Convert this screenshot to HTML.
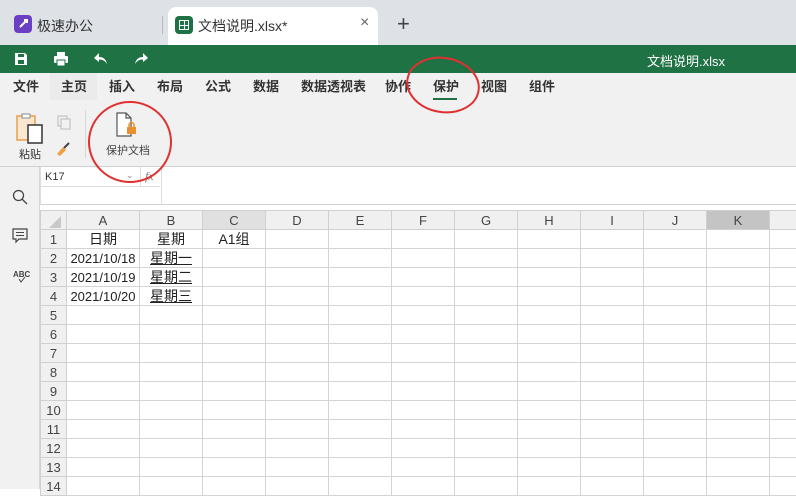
<!DOCTYPE html>
<html><head><meta charset="utf-8"><style>
*{margin:0;padding:0;box-sizing:border-box}
body{width:796px;height:489px;overflow:hidden;position:relative;background:#fff;font-family:"Liberation Sans","Noto Sans CJK SC",sans-serif;font-size:13px;color:#222}
.a{position:absolute}
.menu span{position:absolute;top:79px;font-size:13px;font-weight:bold;color:#333;line-height:15px}
table{position:absolute;left:40px;top:210px;border-collapse:collapse;table-layout:fixed;width:769px}
td{border:1px solid #d4d4d4;height:19px;line-height:17px;font-size:14px;text-align:center;padding:0;white-space:nowrap;overflow:hidden}
tr.h td{background:#f0f0f0;color:#444;font-size:13px;border-color:#d0d0d0}
td.r{background:#f0f0f0;color:#444;font-size:13px;border-color:#d0d0d0}
</style></head><body>
<div class="a" style="left:0;top:0;width:796px;height:45px;background:#dee1e6"></div>
<div class="a" style="left:14px;top:15px;width:18px;height:18px;border-radius:4px;background:#6a3fc4"></div>
<svg class="a" style="left:16px;top:17px" width="14" height="14" viewBox="0 0 14 14"><path d="M4 10 L10 4 M8 3 L11 3 L11 6" stroke="#fff" stroke-width="2" fill="none"/></svg>
<div class="a" style="left:37px;top:16px;font-size:14px;color:#333">极速办公</div>
<div class="a" style="left:162px;top:16px;width:1px;height:18px;background:#bbb"></div>
<div class="a" style="left:168px;top:7px;width:210px;height:38px;background:#fff;border-radius:8px 8px 0 0"></div>
<div class="a" style="left:175px;top:16px;width:18px;height:18px;border-radius:4px;background:#1e7145"></div>
<div class="a" style="left:179px;top:20px;width:10px;height:10px;border:1px solid #fff;background:linear-gradient(#fff,#fff) 4px 0/1px 10px no-repeat,linear-gradient(#fff,#fff) 0 4px/10px 1px no-repeat"></div>
<div class="a" style="left:198px;top:16px;font-size:14px;color:#333">文档说明.xlsx*</div>
<div class="a" style="left:360px;top:14px;font-size:16px;color:#666">×</div>
<div class="a" style="left:397px;top:11px;font-size:22px;color:#444">+</div>
<div class="a" style="left:0;top:45px;width:796px;height:28px;background:#1f7244"></div>
<svg class="a" style="left:13px;top:51px" width="16" height="16" viewBox="0 0 16 16"><path d="M2 2h10l2 2v10H2z" fill="#fff"/><rect x="5" y="3" width="6" height="3" fill="#1f7244"/><rect x="5" y="9" width="6" height="4" fill="#1f7244"/></svg>
<svg class="a" style="left:53px;top:51px" width="16" height="16" viewBox="0 0 16 16"><rect x="4" y="1" width="8" height="4" fill="#fff"/><rect x="1" y="5" width="14" height="7" rx="1" fill="#fff"/><rect x="4" y="9" width="8" height="6" fill="#fff" stroke="#1f7244"/></svg>
<svg class="a" style="left:93px;top:51px" width="16" height="16" viewBox="0 0 16 16"><path d="M6 2 L1 7 L6 11 V8.5 C10 8.5 12 10 14 13 C13 8 10 6 6 6Z" fill="#fff"/></svg>
<svg class="a" style="left:133px;top:51px" width="16" height="16" viewBox="0 0 16 16"><path d="M10 2 L15 7 L10 11 V8.5 C6 8.5 4 10 2 13 C3 8 6 6 10 6Z" fill="#fff"/></svg>
<div class="a" style="left:647px;top:51px;color:#fff;font-size:13px">文档说明.xlsx</div>
<div class="a" style="left:0;top:73px;width:796px;height:94px;background:#f1f1f1;border-bottom:1px solid #d0d0d0"></div>
<div class="a" style="left:50px;top:73px;width:47px;height:27px;background:#ebebeb"></div>
<div class="menu">
<span style="left:13px">文件</span><span style="left:61px">主页</span><span style="left:109px">插入</span><span style="left:157px">布局</span><span style="left:205px">公式</span><span style="left:253px">数据</span><span style="left:301px">数据透视表</span><span style="left:385px">协作</span><span style="left:433px">保护</span><span style="left:481px">视图</span><span style="left:529px">组件</span>
</div>
<div class="a" style="left:433px;top:98px;width:24px;height:2px;background:#1f7244"></div>
<svg class="a" style="left:15px;top:112px" width="30" height="34" viewBox="0 0 30 34"><rect x="2" y="4" width="18" height="24" fill="#fbe7cf" stroke="#e8a050" stroke-width="1.5"/><rect x="7" y="2" width="8" height="4" fill="#fff" stroke="#888"/><rect x="13" y="13" width="14" height="18" fill="#fff" stroke="#333" stroke-width="1.5"/></svg>
<div class="a" style="left:19px;top:146px;font-size:11px;color:#333">粘贴</div>
<svg class="a" style="left:56px;top:114px" width="16" height="16" viewBox="0 0 16 16"><rect x="2" y="2" width="9" height="10" fill="none" stroke="#bbb"/><rect x="5" y="5" width="9" height="10" fill="#f1f1f1" stroke="#bbb"/></svg>
<svg class="a" style="left:55px;top:141px" width="16" height="16" viewBox="0 0 16 16"><path d="M9 7 L14 2" stroke="#444" stroke-width="2"/><path d="M2 13 L8 6 L11 9 L5 15Z" fill="#f0a040"/></svg>
<div class="a" style="left:85px;top:110px;width:1px;height:48px;background:#d6d6d6"></div>
<svg class="a" style="left:115px;top:112px" width="26" height="26" viewBox="0 0 26 26"><path d="M2 1h9l5 5v18H2z" fill="#fff" stroke="#555" stroke-width="1.2"/><path d="M11 1v5h5" fill="none" stroke="#555" stroke-width="1.2"/><rect x="12" y="15" width="9" height="7" fill="#e8912e"/><path d="M14 15v-2a2.5 2.5 0 0 1 5 0v2" fill="none" stroke="#e8912e" stroke-width="1.5"/></svg>
<div class="a" style="left:106px;top:142px;font-size:11px;color:#444">保护文档</div>
<div class="a" style="left:0;top:167px;width:40px;height:322px;background:#f1f1f1;border-right:1px solid #d6d6d6"></div>
<svg class="a" style="left:12px;top:189px" width="16" height="16" viewBox="0 0 16 16"><circle cx="6.5" cy="6.5" r="5" fill="none" stroke="#444" stroke-width="1.3"/><path d="M10 10l5 5" stroke="#444" stroke-width="1.3"/></svg>
<svg class="a" style="left:12px;top:228px" width="16" height="16" viewBox="0 0 16 16"><path d="M1 1h14v10H7l-3 3v-3H1z" fill="none" stroke="#444" stroke-width="1.2"/><path d="M4 4.5h8M4 7.5h8" stroke="#444"/></svg>
<div class="a" style="left:13px;top:270px;font-size:8px;color:#444;font-weight:bold">ABC</div>
<svg class="a" style="left:18px;top:276px" width="8" height="7"><path d="M1 3l2 3 4-5" fill="none" stroke="#444"/></svg>
<div class="a" style="left:40px;top:167px;width:756px;height:38px;background:#fff;border-bottom:1px solid #d0d0d0"></div>
<div class="a" style="left:40px;top:186px;width:120px;height:1px;background:#ddd"></div>
<div class="a" style="left:40px;top:167px;width:1px;height:38px;background:#ddd"></div>
<div class="a" style="left:161px;top:167px;width:1px;height:38px;background:#ddd"></div>
<div class="a" style="left:140px;top:167px;width:1px;height:19px;background:#ddd"></div>
<div class="a" style="left:45px;top:171px;font-size:11px;color:#333">K17</div>
<div class="a" style="left:126px;top:170px;font-size:9px;color:#888">⌄</div>
<div class="a" style="left:145px;top:169px;font-size:12px;color:#777;font-style:italic;font-family:'Liberation Serif',serif">fx</div>
<div class="a" style="left:40px;top:205px;width:756px;height:5px;background:#fff"></div>
<table>
<colgroup><col style="width:26px"><col style="width:73px"><col style="width:63px"><col style="width:63px"><col style="width:63px"><col style="width:63px"><col style="width:63px"><col style="width:63px"><col style="width:63px"><col style="width:63px"><col style="width:63px"><col style="width:63px"><col style="width:40px"></colgroup>
<tr class="h"><td style="background:#f0f0f0"><svg width="12" height="12" style="margin-left:8px;margin-top:4px;display:block"><path d="M12 0V12H0Z" fill="#c8c8c8"/></svg></td><td>A</td><td>B</td><td style="background:#e0e0e0">C</td><td>D</td><td>E</td><td>F</td><td>G</td><td>H</td><td>I</td><td>J</td><td style="background:#c4c4c4">K</td><td></td></tr>
<tr><td class="r">1</td><td>日期</td><td>星期</td><td>A1组</td><td></td><td></td><td></td><td></td><td></td><td></td><td></td><td></td><td></td></tr>
<tr><td class="r">2</td><td style="font-size:13px">2021/10/18</td><td><u>星期一</u></td><td></td><td></td><td></td><td></td><td></td><td></td><td></td><td></td><td></td><td></td></tr>
<tr><td class="r">3</td><td style="font-size:13px">2021/10/19</td><td><u>星期二</u></td><td></td><td></td><td></td><td></td><td></td><td></td><td></td><td></td><td></td><td></td></tr>
<tr><td class="r">4</td><td style="font-size:13px">2021/10/20</td><td><u>星期三</u></td><td></td><td></td><td></td><td></td><td></td><td></td><td></td><td></td><td></td><td></td></tr>
<tr><td class="r">5</td><td></td><td></td><td></td><td></td><td></td><td></td><td></td><td></td><td></td><td></td><td></td><td></td></tr>
<tr><td class="r">6</td><td></td><td></td><td></td><td></td><td></td><td></td><td></td><td></td><td></td><td></td><td></td><td></td></tr>
<tr><td class="r">7</td><td></td><td></td><td></td><td></td><td></td><td></td><td></td><td></td><td></td><td></td><td></td><td></td></tr>
<tr><td class="r">8</td><td></td><td></td><td></td><td></td><td></td><td></td><td></td><td></td><td></td><td></td><td></td><td></td></tr>
<tr><td class="r">9</td><td></td><td></td><td></td><td></td><td></td><td></td><td></td><td></td><td></td><td></td><td></td><td></td></tr>
<tr><td class="r">10</td><td></td><td></td><td></td><td></td><td></td><td></td><td></td><td></td><td></td><td></td><td></td><td></td></tr>
<tr><td class="r">11</td><td></td><td></td><td></td><td></td><td></td><td></td><td></td><td></td><td></td><td></td><td></td><td></td></tr>
<tr><td class="r">12</td><td></td><td></td><td></td><td></td><td></td><td></td><td></td><td></td><td></td><td></td><td></td><td></td></tr>
<tr><td class="r">13</td><td></td><td></td><td></td><td></td><td></td><td></td><td></td><td></td><td></td><td></td><td></td><td></td></tr>
<tr><td class="r">14</td><td></td><td></td><td></td><td></td><td></td><td></td><td></td><td></td><td></td><td></td><td></td><td></td></tr>
</table>
<svg class="a" style="left:0;top:0" width="796" height="489"><ellipse cx="130" cy="142" rx="41" ry="40" fill="none" stroke="#e03030" stroke-width="2"/><ellipse cx="443" cy="85" rx="36" ry="27" fill="none" stroke="#e03030" stroke-width="2" transform="rotate(10 443 85)"/></svg>
</body></html>
